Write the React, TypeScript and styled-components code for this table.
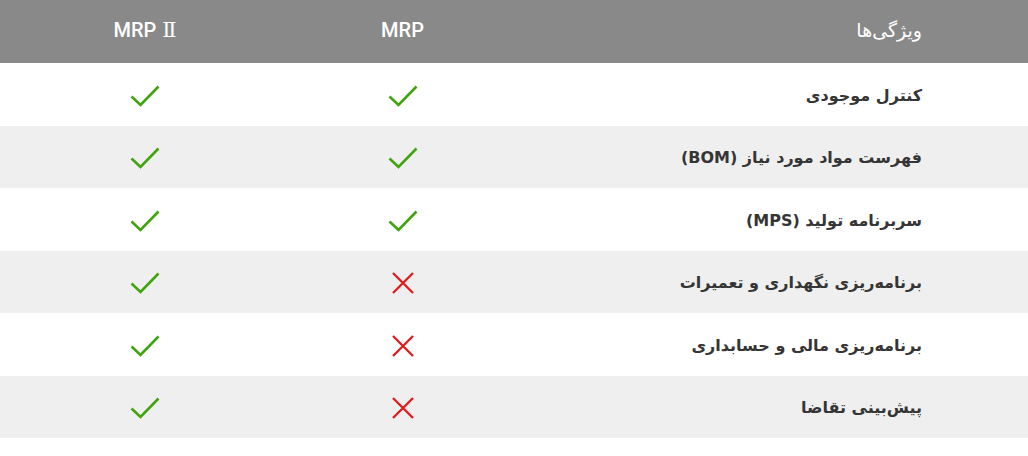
import React from 'react';
import styled, { createGlobalStyle } from 'styled-components';

type Feature = {
  name: string;
  mrp: boolean;
  mrp2: boolean;
};

const features: Feature[] = [
  { name: 'کنترل موجودی', mrp: true, mrp2: true },
  { name: 'فهرست مواد مورد نیاز (BOM)', mrp: true, mrp2: true },
  { name: 'سربرنامه تولید (MPS)', mrp: true, mrp2: true },
  { name: 'برنامه‌ریزی نگهداری و تعمیرات', mrp: false, mrp2: true },
  { name: 'برنامه‌ریزی مالی و حسابداری', mrp: false, mrp2: true },
  { name: 'پیش‌بینی تقاضا', mrp: false, mrp2: true },
];

const GlobalStyle = createGlobalStyle`
  html, body {
    margin: 0;
    padding: 0;
    background: #ffffff;
  }
  body {
    font-family: 'DejaVu Sans', 'Noto Sans', sans-serif;
  }
`;

// ستون‌ها از راست به چپ: ویژگی / MRP / MRP II
const Table = styled.div`
  direction: rtl;
  width: 100%;
`;

const Row = styled.div<{ $shade?: 'head' | 'odd' | 'even' }>`
  display: grid;
  grid-template-columns: 513px 225px 290px;
  height: ${(p) => (p.$shade === 'head' ? '63px' : '62.5px')};
  background: ${(p) =>
    p.$shade === 'head' ? '#898989' : p.$shade === 'even' ? '#efefef' : '#ffffff'};
`;

const HeadCell = styled.div<{ $feature?: boolean }>`
  display: flex;
  align-items: center;
  justify-content: ${(p) => (p.$feature ? 'flex-start' : 'center')};
  padding-right: ${(p) => (p.$feature ? '106px' : '0')};
  padding-bottom: 3px;
  color: #ffffff;
  font-family: ${(p) => (p.$feature ? "'DejaVu Sans', sans-serif" : "Roboto, 'Liberation Sans', sans-serif")};
  font-size: ${(p) => (p.$feature ? '19px' : '20px')};
  font-weight: 500;
  direction: ${(p) => (p.$feature ? 'rtl' : 'ltr')};
`;

const Roman = styled.span`
  font-family: 'DejaVu Serif', 'Liberation Serif', serif;
  font-weight: 400;
  font-size: 21px;
  margin-left: 6px;
`;

const NameCell = styled.div`
  display: flex;
  align-items: center;
  padding-right: 106px;
  padding-top: 2px;
  color: #353535;
  font-family: 'DejaVu Sans', sans-serif;
  font-size: 16px;
  font-weight: 600;
`;

const MarkCell = styled.div`
  display: flex;
  align-items: center;
  justify-content: center;
  padding-top: 3px;
`;

const Check = () => (
  <svg width="30" height="22" viewBox="0 0 30 22">
    <path d="M1.5 11.5 L10.5 20 L28.5 1.5" fill="none" stroke="#3fa40e" strokeWidth="2.6" />
  </svg>
);

const Cross = () => (
  <svg width="22" height="22" viewBox="0 0 22 22">
    <path d="M1 1 L21 21 M21 1 L1 21" fill="none" stroke="#e11b1b" strokeWidth="2.3" />
  </svg>
);

const Mark: React.FC<{ ok: boolean }> = ({ ok }) => (
  <MarkCell>{ok ? <Check /> : <Cross />}</MarkCell>
);

const App: React.FC = () => {
  return (
    <>
      <GlobalStyle />
      <Table>
        <Row $shade="head">
          <HeadCell $feature>ویژگی‌ها</HeadCell>
          <HeadCell>MRP</HeadCell>
          <HeadCell>
            MRP<Roman>Ⅱ</Roman>
          </HeadCell>
        </Row>
        {features.map((f, i) => (
          <Row key={f.name} $shade={i % 2 === 0 ? 'odd' : 'even'}>
            <NameCell>{f.name}</NameCell>
            <Mark ok={f.mrp} />
            <Mark ok={f.mrp2} />
          </Row>
        ))}
      </Table>
    </>
  );
};

export default App;
